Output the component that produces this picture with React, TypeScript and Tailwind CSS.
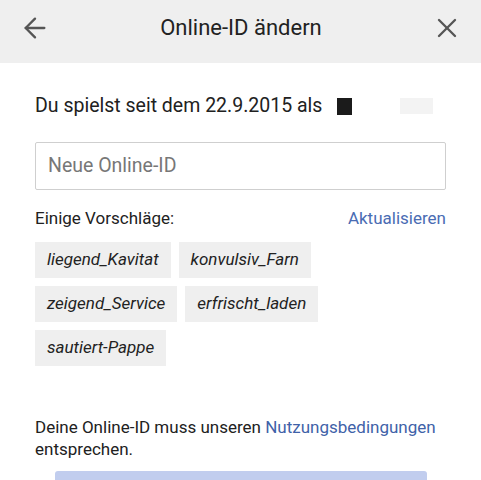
import { ArrowLeft, X } from "lucide-react";

export default function App() {
    const suggestions = [
        ["liegend_Kavitat", "konvulsiv_Farn"],
        ["zeigend_Service", "erfrischt_laden"],
        ["sautiert-Pappe"],
    ];

    return (
        <main className="w-[481px] h-[480px] overflow-hidden bg-white text-[#212121] font-['Roboto',sans-serif]">
            {/* Header */}
            <header className="h-[63px] bg-[#efefef] flex items-center justify-between pl-[19px] pr-[18px] pb-[7px]">
                <ArrowLeft className="w-[32px] h-[32px] text-[#555]" strokeWidth={1.75} />
                <h1 className="text-[22px] leading-none text-[#222]">Online-ID ändern</h1>
                <X className="w-[32px] h-[32px] text-[#555]" strokeWidth={1.75} />
            </header>

            <section className="px-[35px]">
                <div className="flex items-center h-[38px] mt-[24px] text-[19.5px]">
                    <span>Du spielst seit dem 22.9.2015 als</span>
                    <span className="ml-[15px] w-[15px] h-[17px] bg-[#1b1b1b]" />
                    <span className="ml-[48px] w-[33px] h-[16px] bg-[#f3f3f3]" />
                </div>

                <div className="mt-[17px] h-[48px] border border-[#cfcfcf] rounded-[2px] flex items-center px-[12px] text-[19.5px] text-[#777]">
                    Neue Online-ID
                </div>

                <div className="mt-[19px] h-[20px] flex justify-between items-center text-[17px]">
                    <span>Einige Vorschläge:</span>
                    <span className="text-[#4a6cb3]">Aktualisieren</span>
                </div>

                <div className="mt-[13px] flex flex-col gap-[8px]">
                    {suggestions.map((row, i) => (
                        <div key={i} className="flex gap-[8px]">
                            {row.map((s) => (
                                <span key={s} className="h-[36px] px-[12px] flex items-center bg-[#efefef] italic text-[17px] text-[#222]">
                                    {s}
                                </span>
                            ))}
                        </div>
                    ))}
                </div>

                <p className="mt-[50px] text-[17px] leading-[22px]">
                    Deine Online-ID muss unseren <span className="text-[#3f62a8]">Nutzungsbedingungen</span> entsprechen.
                </p>
            </section>

            <div className="ml-[55px] mt-[11px] h-[20px] bg-[#c1cdee] rounded-t-[3px] w-[372px]" />
        </main>
    );
}
